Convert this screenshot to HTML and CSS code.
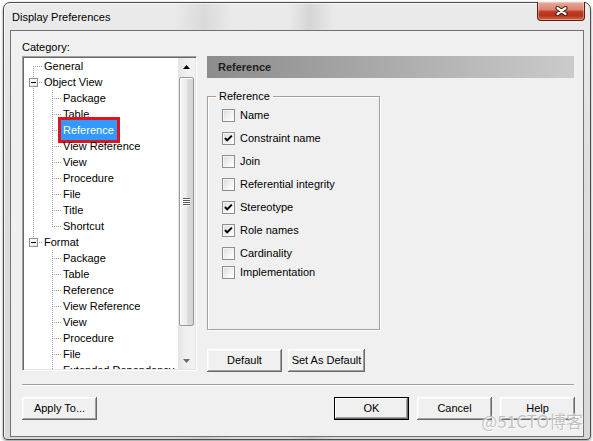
FILE: index.html
```html
<!DOCTYPE html>
<html>
<head>
<meta charset="utf-8">
<title>Display Preferences</title>
<link rel="stylesheet" href="styles.css">
</head>
<body>
<div class="window">
  <div class="titlebar">
    <span class="title">Display Preferences</span>
    <div class="close">
      <svg width="13" height="10" viewBox="0 0 13 10"><path d="M2.5 2 L10.5 8 M10.5 2 L2.5 8" stroke="#4a140c" stroke-width="4.2" stroke-linecap="round"/><path d="M2.5 2 L10.5 8 M10.5 2 L2.5 8" stroke="#fff" stroke-width="2.2" stroke-linecap="round"/></svg>
    </div>
  </div>
  <div class="client">
    <div class="cat-label">Category:</div>
    <div class="main">
      <div class="tree">
        <div class="tree-list">
          <div class="row"><span class="c first"></span><span class="lbl">General</span></div>
          <div class="row"><span class="c tee"><span class="exp"></span></span><span class="lbl">Object View</span></div>
          <div class="row"><span class="c pipe"></span><span class="c tee"></span><span class="lbl">Package</span></div>
          <div class="row"><span class="c pipe"></span><span class="c tee"></span><span class="lbl">Table</span></div>
          <div class="row"><span class="c pipe"></span><span class="c tee"></span><span class="lbl selected">Reference</span></div>
          <div class="row"><span class="c pipe"></span><span class="c tee"></span><span class="lbl">View Reference</span></div>
          <div class="row"><span class="c pipe"></span><span class="c tee"></span><span class="lbl">View</span></div>
          <div class="row"><span class="c pipe"></span><span class="c tee"></span><span class="lbl">Procedure</span></div>
          <div class="row"><span class="c pipe"></span><span class="c tee"></span><span class="lbl">File</span></div>
          <div class="row"><span class="c pipe"></span><span class="c tee"></span><span class="lbl">Title</span></div>
          <div class="row"><span class="c pipe"></span><span class="c ell"></span><span class="lbl">Shortcut</span></div>
          <div class="row"><span class="c ell"><span class="exp"></span></span><span class="lbl">Format</span></div>
          <div class="row"><span class="c"></span><span class="c tee"></span><span class="lbl">Package</span></div>
          <div class="row"><span class="c"></span><span class="c tee"></span><span class="lbl">Table</span></div>
          <div class="row"><span class="c"></span><span class="c tee"></span><span class="lbl">Reference</span></div>
          <div class="row"><span class="c"></span><span class="c tee"></span><span class="lbl">View Reference</span></div>
          <div class="row"><span class="c"></span><span class="c tee"></span><span class="lbl">View</span></div>
          <div class="row"><span class="c"></span><span class="c tee"></span><span class="lbl">Procedure</span></div>
          <div class="row"><span class="c"></span><span class="c tee"></span><span class="lbl">File</span></div>
          <div class="row"><span class="c"></span><span class="c tee"></span><span class="lbl">Extended Dependency</span></div>
        </div>
        <div class="vscroll">
          <div class="sb-btn"><svg width="7" height="4" viewBox="0 0 7 4"><polygon points="0,4 3.5,0 7,4" fill="#000"/></svg></div>
          <div class="sb-track"><div class="thumb"><span class="grip"></span></div></div>
          <div class="sb-btn"><svg width="7" height="4" viewBox="0 0 7 4"><polygon points="0,0 7,0 3.5,4" fill="#6a6a6a"/></svg></div>
        </div>
      </div>
      <div class="panel">
        <div class="panel-head">Reference</div>
        <div class="group">
          <span class="group-label">Reference</span>
          <div class="checks">
            <div class="check-row"><span class="cb"></span><span>Name</span></div>
            <div class="check-row"><span class="cb"><svg width="11" height="11" viewBox="0 0 11 11"><polyline points="2,5 4.2,7.4 8.8,2.6" fill="none" stroke="#000" stroke-width="2"/></svg></span><span>Constraint name</span></div>
            <div class="check-row"><span class="cb"></span><span>Join</span></div>
            <div class="check-row"><span class="cb"></span><span>Referential integrity</span></div>
            <div class="check-row"><span class="cb"><svg width="11" height="11" viewBox="0 0 11 11"><polyline points="2,5 4.2,7.4 8.8,2.6" fill="none" stroke="#000" stroke-width="2"/></svg></span><span>Stereotype</span></div>
            <div class="check-row"><span class="cb"><svg width="11" height="11" viewBox="0 0 11 11"><polyline points="2,5 4.2,7.4 8.8,2.6" fill="none" stroke="#000" stroke-width="2"/></svg></span><span>Role names</span></div>
            <div class="check-row"><span class="cb"></span><span>Cardinality</span></div>
            <div class="check-row tight"><span class="cb"></span><span>Implementation</span></div>
          </div>
        </div>
        <div class="panel-buttons">
          <button class="btn">Default</button>
          <button class="btn wide">Set As Default</button>
        </div>
      </div>
    </div>
    <div class="sep"></div>
    <div class="footer">
      <button class="btn">Apply To...</button>
      <div class="footer-right">
        <button class="btn default">OK</button>
        <button class="btn">Cancel</button>
        <button class="btn">Help</button>
      </div>
    </div>
    <div class="watermark">@51CTO博客</div>
  </div>
</div>
</body>
</html>
```
FILE: styles.css
```css
html, body {
  margin: 0;
  padding: 0;
  background: #ffffff;
}

body {
  font-family: "Liberation Sans", Arial, sans-serif;
  font-size: 11px;
  color: #000;
  width: 593px;
  height: 441px;
  overflow: hidden;
}

.window {
  box-sizing: border-box;
  margin: 2px 0 0 3px;
  width: 588px;
  height: 438px;
  border: 1px solid #4c4c4c;
  border-radius: 7px 7px 4px 4px;
  padding: 0 6px 2px 6px;
  background:
    linear-gradient(to right, transparent 170px, rgba(0,0,0,0.07) 200px, transparent 228px, transparent 285px, rgba(0,0,0,0.09) 306px, transparent 330px),
    linear-gradient(#ebebeb, #dedede 40%, #d8d8d8);
  box-shadow: 0 1px 3px rgba(0,0,0,0.45), inset 1px 1px 0 rgba(255,255,255,0.7);
}

.titlebar {
  height: 27px;
  display: flex;
  justify-content: space-between;
  align-items: flex-start;
}

.title {
  margin: 7px 0 0 2px;
  line-height: 14px;
  font-size: 11px;
  color: #000;
}

.close {
  box-sizing: border-box;
  width: 48px;
  height: 19px;
  margin: -1px -1px 0 0;
  border: 1px solid #5e1b12;
  border-top: none;
  border-radius: 0 0 4px 4px;
  background: linear-gradient(#e8ab9d 0%, #d9836f 45%, #c3402a 50%, #b5321d 75%, #d06848 100%);
  box-shadow: inset 0 0 0 1px rgba(255,255,255,0.35);
  display: flex;
  align-items: center;
  justify-content: center;
}

.client {
  position: relative;
  box-sizing: border-box;
  height: 407px;
  border: 1px solid #727272;
  background: #f0f0f0;
  padding: 9px 9px 0 11px;
}

.cat-label {
  line-height: 14px;
  height: 14px;
  margin-bottom: 2px;
}

.main {
  display: flex;
  align-items: flex-start;
  gap: 10px;
}

/* Tree view */
.tree {
  box-sizing: border-box;
  width: 175px;
  height: 315px;
  flex: none;
  display: flex;
  border: 1px solid;
  border-color: #a0a0a0 #ffffff #ffffff #a0a0a0;
  box-shadow: inset 1px 1px 0 #696969, inset -1px -1px 0 #e3e3e3;
  padding: 1px;
  background: #fff;
}

.tree-list {
  flex: 1;
  overflow: hidden;
  min-width: 0;
}

.row {
  display: flex;
  align-items: center;
  height: 16px;
  white-space: nowrap;
}

.c {
  display: block;
  width: 19px;
  height: 16px;
  flex: none;
}

.c.pipe {
  background: repeating-linear-gradient(to bottom, #a0a0a0 0 1px, transparent 1px 2px) 9px 0 / 1px 16px no-repeat;
}

.c.tee {
  background:
    repeating-linear-gradient(to right, #a0a0a0 0 1px, transparent 1px 2px) 9px 8px / 10px 1px no-repeat,
    repeating-linear-gradient(to bottom, #a0a0a0 0 1px, transparent 1px 2px) 9px 0 / 1px 16px no-repeat;
}

.c.ell {
  background:
    repeating-linear-gradient(to right, #a0a0a0 0 1px, transparent 1px 2px) 9px 8px / 10px 1px no-repeat,
    repeating-linear-gradient(to bottom, #a0a0a0 0 1px, transparent 1px 2px) 9px 0 / 1px 9px no-repeat;
}

.c.first {
  background:
    repeating-linear-gradient(to right, #a0a0a0 0 1px, transparent 1px 2px) 9px 8px / 10px 1px no-repeat,
    repeating-linear-gradient(to bottom, #a0a0a0 0 1px, transparent 1px 2px) 9px 8px / 1px 8px no-repeat;
}

.exp {
  display: block;
  box-sizing: border-box;
  width: 9px;
  height: 9px;
  margin: 4px 0 0 5px;
  border: 1px solid #919191;
  background: linear-gradient(#000, #000) center / 5px 1px no-repeat, linear-gradient(135deg, #ffffff, #e6e6e6);
}

.lbl {
  padding-left: 1px;
  line-height: 16px;
}

.lbl.selected {
  background: #3399ff;
  color: #fff;
  padding: 2px 3px 2px 2px;
  margin: -2px 0 -2px -1px;
  outline: 3px solid #e0141c;
}

/* Scrollbar */
.vscroll {
  width: 17px;
  flex: none;
  display: flex;
  flex-direction: column;
  background: linear-gradient(to right, #e4e4e4, #efefef 40%, #f3f3f3);
}

.sb-btn {
  height: 17px;
  flex: none;
  display: flex;
  align-items: center;
  justify-content: center;
}

.sb-track {
  flex: 1;
  padding-top: 2px;
}

.thumb {
  box-sizing: border-box;
  height: 249px;
  margin: 0 1px;
  border: 1px solid #999;
  border-radius: 2px;
  background: linear-gradient(to right, #f6f6f6, #ececec 50%, #dcdcdc 55%, #d2d2d2);
  box-shadow: inset 1px 1px 0 #fff;
  display: flex;
  align-items: center;
  justify-content: center;
}

.grip {
  display: block;
  width: 7px;
  height: 8px;
  background: repeating-linear-gradient(to bottom, #5a5a5a 0 1px, #fbfbfb 1px 2px);
}

/* Right panel */
.panel {
  flex: 1;
  display: flex;
  flex-direction: column;
}

.panel-head {
  height: 22px;
  line-height: 22px;
  padding-left: 11px;
  font-weight: bold;
  color: #1e1e1e;
  background: linear-gradient(to right, #8c8c8c, #cbcbcb);
  margin-bottom: 18px;
}

.group {
  box-sizing: border-box;
  width: 173px;
  height: 234px;
  border: 1px solid #a0a0a0;
  box-shadow: 1px 1px 0 #fff, inset 1px 1px 0 #fff;
  display: flex;
  flex-direction: column;
  margin-bottom: 19px;
}

.group-label {
  align-self: flex-start;
  line-height: 13px;
  margin: -7px 0 0 8px;
  padding: 0 3px;
  background: #f0f0f0;
}

.checks {
  margin-top: 4px;
  padding-left: 14px;
  display: flex;
  flex-direction: column;
  gap: 7px;
}

.check-row {
  display: flex;
  align-items: center;
  height: 16px;
  white-space: nowrap;
}

.check-row.tight {
  margin-top: -4px;
}

.cb {
  box-sizing: border-box;
  width: 13px;
  height: 13px;
  flex: none;
  margin-right: 5px;
  border: 1px solid #8e8f8f;
  background: linear-gradient(135deg, #dadada, #f4f4f4 60%, #ffffff);
  box-shadow: inset 1px 1px 0 #f4f4f4;
  display: flex;
  align-items: center;
  justify-content: center;
}

.panel-buttons {
  display: flex;
  gap: 6px;
}

/* Buttons */
.btn {
  box-sizing: border-box;
  width: 75px;
  height: 23px;
  padding: 0 0 2px 0;
  margin: 0;
  border: none;
  font-family: "Liberation Sans", Arial, sans-serif;
  font-size: 11px;
  color: #000;
  background: #f0f0f0;
  box-shadow: inset -1px -1px 0 #696969, inset 1px 1px 0 #ffffff, inset -2px -2px 0 #a0a0a0, inset 2px 2px 0 #f7f7f7;
}

.btn.wide {
  width: 77px;
}

.btn.default {
  box-shadow: inset 0 0 0 1px #000, inset -2px -2px 0 #696969, inset 2px 2px 0 #ffffff, inset -3px -3px 0 #a0a0a0;
}

.sep {
  margin-top: 12px;
  border-top: 1px solid #a0a0a0;
  border-bottom: 1px solid #ffffff;
}

.footer {
  margin-top: 11px;
  display: flex;
  justify-content: space-between;
  margin-right: -1px;
}

.footer-right {
  display: flex;
  gap: 8px;
}

.watermark {
  position: absolute;
  right: 0;
  bottom: 5px;
  font-family: "Noto Sans CJK SC", "Liberation Sans", sans-serif;
  font-size: 17px;
  line-height: 20px;
  color: rgba(140, 140, 140, 0.55);
  text-shadow: 0 0 1px #fff, 1px 1px 0 rgba(255,255,255,0.8);
  white-space: nowrap;
}
```
